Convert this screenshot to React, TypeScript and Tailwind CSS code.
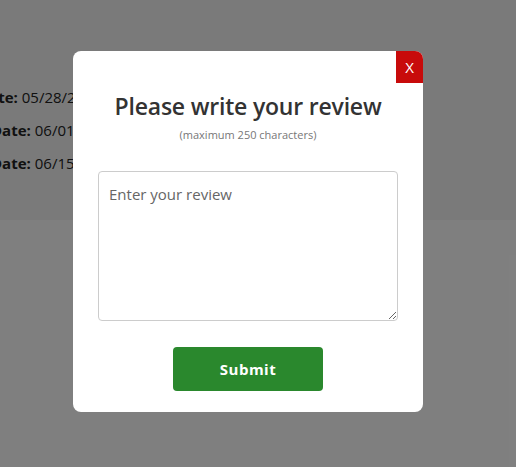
import * as React from 'react';
import { useState } from 'react';

const rows = [
  { label: 'Date:', value: '05/28/2024', shift: 'ml-[-22px]' },
  { label: 'Date:', value: '06/01/2024', shift: 'ml-[-9px]' },
  { label: 'Date:', value: '06/15/2024', shift: 'ml-[-9px]' },
];

export default function App() {
  const [review, setReview] = useState('');

  return (
    <div className="relative w-[516px] h-[467px] overflow-hidden bg-white font-['Open_Sans',sans-serif]">
      {/* Page behind the modal */}
      <div className="h-[220px] bg-[#f5f5f5] pt-[86px]">
        <div className="flex flex-col gap-[11px] text-[15px] text-[#222]">
          {rows.map((r, i) => (
            <p key={i} className={`${r.shift} whitespace-nowrap leading-[22px]`}>
              <span className="font-bold">{r.label}</span> {r.value}
            </p>
          ))}
        </div>
      </div>

      {/* Overlay */}
      <div className="absolute inset-0 bg-black/50 pl-[73px] pt-[51px]">
        <div className="relative w-[350px] h-[361px] rounded-lg bg-white flex flex-col items-center">
          <button
            type="button"
            className="absolute top-0 right-0 w-[27px] h-[32px] bg-[#c80b0b] rounded-tr-lg text-white text-[15px] leading-none flex items-center justify-center"
          >
            X
          </button>

          <h2 className="mt-[39px] text-[23px] leading-[32px] font-semibold text-[#333] tracking-[-0.2px]">
            Please write your review
          </h2>
          <p className="mt-[6px] text-[11px] text-[#777] leading-[14px]">
            (maximum 250 characters)
          </p>

          <textarea
            value={review}
            onChange={(e) => setReview(e.target.value)}
            maxLength={250}
            placeholder="Enter your review"
            className="mt-[29px] w-[300px] h-[150px] border border-[#cccccc] rounded-[4px] px-[10px] py-[12px] text-[15px] leading-[20px] text-[#333] placeholder:text-[#666] outline-none resize"
          />

          <button
            type="button"
            className="mt-[26px] w-[150px] h-[44px] rounded-[4px] bg-[#2a882d] text-white text-[15px] font-bold tracking-[0.5px]"
          >
            Submit
          </button>
        </div>
      </div>
    </div>
  );
}
